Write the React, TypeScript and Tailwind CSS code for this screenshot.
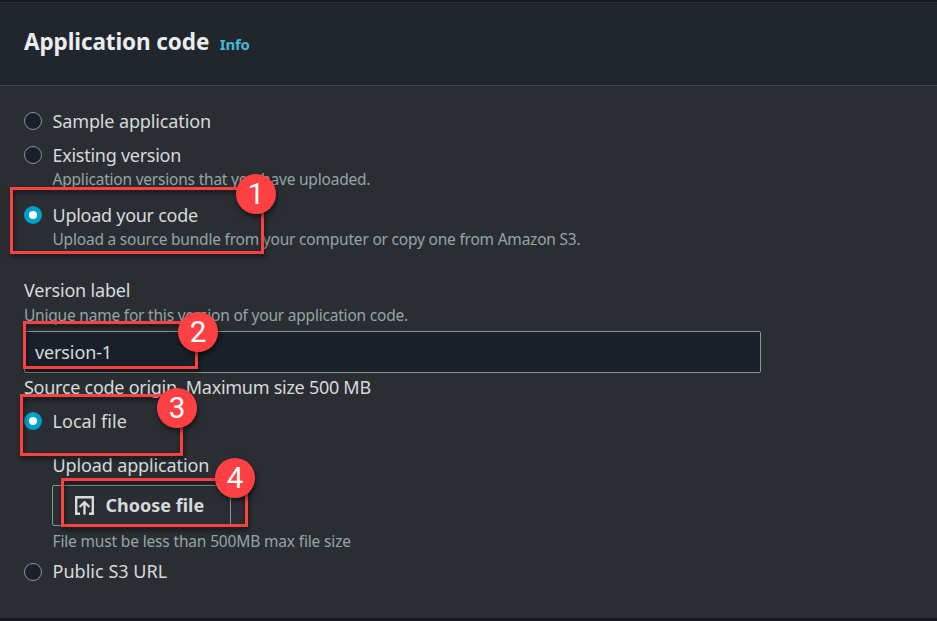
import React from "react";
import type { ReactNode } from "react";

function Radio({ checked = false, className = "mt-[3px]" }: { checked?: boolean; className?: string }) {
  return (
    <span
      className={`flex size-[18px] shrink-0 items-center justify-center rounded-full ${
        checked ? "bg-[#00a1c9]" : "border border-[#879596] bg-[#1a2029]"
      } ${className}`}
    >
      {checked && <span className="size-2 rounded-full bg-white" />}
    </span>
  );
}

function Option({
  label,
  description,
  checked,
  tracking,
  radioClass,
}: {
  label: string;
  description?: ReactNode;
  checked?: boolean;
  tracking: string;
  radioClass?: string;
}) {
  return (
    <div className="flex gap-[10.5px]">
      <Radio checked={checked} className={radioClass} />
      <div>
        <div className={`h-6 text-[18px] leading-6 ${tracking}`}>{label}</div>
        {description && <Hint className="mt-[2px]">{description}</Hint>}
      </div>
    </div>
  );
}

function Hint({ children, className = "tracking-[-0.21px]" }: { children: ReactNode; className?: string }) {
  return (
    <div className={`h-5 text-[15.5px] leading-5 text-[#95a5a6] ${className} ${className.includes("tracking") ? "" : "tracking-[-0.21px]"}`}>
      {children}
    </div>
  );
}

function Callout({ n, box, badge }: { n: number; box: string; badge: string }) {
  return (
    <>
      <div className={`absolute border-3 border-[#ff4043] drop-shadow-[1px_3px_2px_rgba(0,0,0,0.6)] ${box}`} />
      <div
        className={`absolute flex size-10 items-center justify-center rounded-full bg-[#ff4043] pt-[2px] font-['Roboto',sans-serif] text-[29.5px] leading-none text-white shadow-[1px_3px_5px_rgba(0,0,0,0.55)] ${badge}`}
      >
        {n}
      </div>
    </>
  );
}

export default function App() {
  return (
    <div className="relative flex h-[621px] w-[937px] flex-col overflow-hidden bg-[#16191f] pt-[2px] font-['Noto_Sans',sans-serif] whitespace-nowrap text-[#d5dbdb]">
      <header className="flex h-[84px] shrink-0 items-baseline border-t border-b border-t-[#2d3034] border-b-[#414750] bg-[#21252c] pt-[24px] pl-6">
        <h2 className="text-[22.5px] leading-[30px] font-bold tracking-[-0.1px] text-[#eaeded]">Application code</h2>
        <a className="ml-[10.5px] text-[15px] leading-5 font-bold tracking-[-0.2px] text-[#44b9d6]">Info</a>
      </header>

      <main className="flex h-[532px] shrink-0 flex-col bg-[#2a2e33] px-6 pt-[23px]">
        <Option label="Sample application" tracking="tracking-[-0.13px]" />
        <div className="mt-[10px]">
          <Option
            label="Existing version"
            tracking="tracking-[-0.27px]"
            description="Application versions that you have uploaded."
          />
        </div>
        <div className="mt-[14px]">
          <Option
            label="Upload your code"
            tracking="tracking-[-0.27px]"
            checked
            description="Upload a source bundle from your computer or copy one from Amazon S3."
          />
        </div>

        <label className="mt-[29px] h-6 text-[18px] leading-6 tracking-[-0.18px]">Version label</label>
        <Hint className="mt-[3px]">Unique name for this version of your application code.</Hint>
        <div className="mt-[6px] flex h-[42px] w-[737px] items-center rounded-[2px] border border-[#879596] bg-[#1a2029] px-[10px] pt-px text-[18px] tracking-[-0.12px]">
          version-1
        </div>

        <div className="mt-[2px] h-6 text-[18px] leading-6 tracking-[-0.27px]">
          Source code origin. Maximum size 500 MB
        </div>
        <div className="mt-[10px]">
          <Option label="Local file" checked tracking="tracking-[0.03px]" />
        </div>
        <div className="mt-5 ml-7 flex flex-col items-start">
          <div className="ml-[0.5px] h-6 text-[18px] leading-6 tracking-[-0.13px]">Upload application</div>
          <button className="mt-2 flex h-[41px] w-[179px] items-center rounded-[2px] border border-[#879596] pl-[22px] text-[18px] font-bold">
            <svg width="19" height="19" viewBox="0 0 19 19" fill="none" stroke="currentColor" strokeWidth="2.4">
              <path d="M5 17.8H1.2V1.2H17.8V17.8H14" />
              <path d="M9.5 18.4V6.2M4.6 11L9.5 6.1L14.4 11" />
            </svg>
            <span className="ml-[11.5px]">Choose file</span>
          </button>
          <Hint className="mt-[5px] ml-[0.5px] tracking-[-0.16px]">File must be less than 500MB max file size</Hint>
        </div>
        <div className="mt-2">
          <Option label="Public S3 URL" tracking="tracking-[0.03px]" radioClass="mt-1" />
        </div>
      </main>

      <Callout n={1} box="left-[10px] top-[187px] h-[67px] w-[254px]" badge="left-[236px] top-[174px]" />
      <Callout n={2} box="left-[23px] top-[321px] h-12 w-[175px]" badge="left-[178px] top-[312px]" />
      <Callout n={3} box="left-[20px] top-[394px] h-[62px] w-[163px]" badge="left-[157px] top-[388px]" />
      <Callout n={4} box="left-[61px] top-[478px] h-[49px] w-[187px]" badge="left-[215px] top-[458px]" />
    </div>
  );
}
